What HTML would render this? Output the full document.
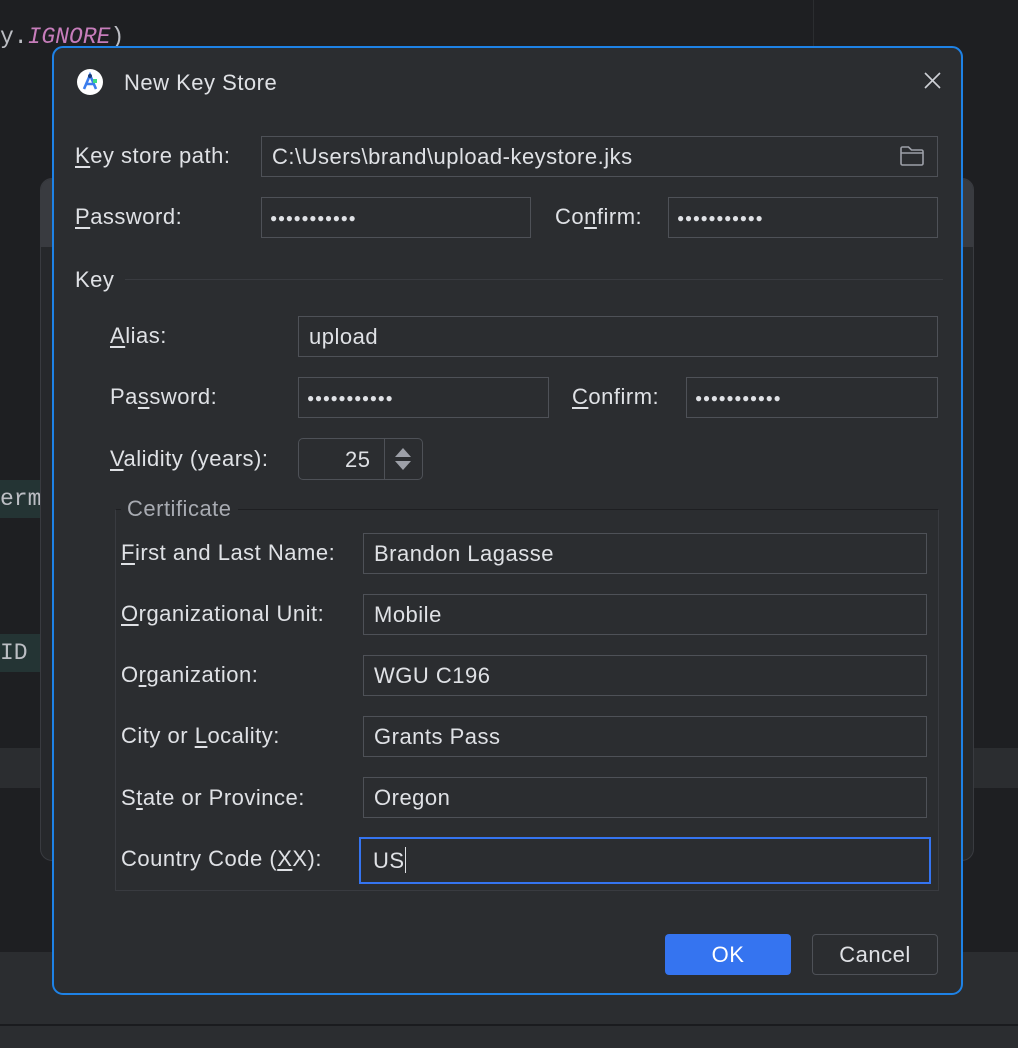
<!DOCTYPE html>
<html><head><meta charset="utf-8"><style>
*{margin:0;padding:0;box-sizing:border-box}
body{width:1018px;height:1048px;background:#1e1f22;position:relative;overflow:hidden;font-family:"Liberation Sans",sans-serif;font-size:22px;letter-spacing:0.5px;color:#dfe1e5}
.a{position:absolute}
.in{position:absolute;border:1px solid #4e5157;background:#2b2d30;height:41px;padding-left:10px;line-height:40px;color:#dfe1e5;font-size:22px}
.lb{position:absolute;line-height:26px;white-space:nowrap}
u{text-decoration:underline;text-underline-offset:3px}
.dots{letter-spacing:0.6px;font-size:12px;padding-left:8px}
</style></head><body>
<div class="a" style="left:813px;top:0;width:1px;height:178px;background:#2b2d30"></div>
<div class="a" style="left:0;top:24px;font-family:'Liberation Mono',monospace;font-size:23px;letter-spacing:0;color:#bcbec4">y.<span style="color:#c77dbb;font-style:italic">IGNORE</span>)</div>
<div class="a" style="left:0;top:480px;width:41px;height:38px;background:#243434"></div>
<div class="a" style="left:0;top:486px;font-family:'Liberation Mono',monospace;font-size:23px;letter-spacing:0;color:#bcbec4">erm</div>
<div class="a" style="left:0;top:634px;width:41px;height:38px;background:#243434"></div>
<div class="a" style="left:0;top:640px;font-family:'Liberation Mono',monospace;font-size:23px;letter-spacing:0;color:#bcbec4">ID</div>
<div class="a" style="left:0;top:748px;width:1018px;height:40px;background:#2b2d30"></div>
<div class="a" style="left:0;top:952px;width:1018px;height:72px;background:#2b2d30"></div>
<div class="a" style="left:0;top:1024px;width:1018px;height:2px;background:#1a1b1e"></div>
<div class="a" style="left:0;top:1026px;width:1018px;height:22px;background:#2b2d30"></div>
<div class="a" style="left:40px;top:178px;width:934px;height:683px;background:#26282b;border:1px solid #393b40;border-radius:12px;overflow:hidden">
 <div style="height:68px;background:#393b40"></div>
</div>
<div class="a" style="left:52px;top:46px;width:911px;height:949px;background:#2b2d30;border:2px solid #1e82e6;border-radius:11px"></div>
<svg class="a" style="left:76px;top:68px" width="28" height="28" viewBox="0 0 28 28"><circle cx="14" cy="14" r="13" fill="#fff"/><path d="M8 21 L14 7 L20 21 M10.5 16 H17.5" stroke="#3b7ded" stroke-width="2.6" fill="none"/><circle cx="14" cy="8" r="2" fill="#1b3d7a"/><rect x="17" y="11" width="4" height="4" fill="#3ddc84"/></svg>
<div class="lb" style="left:124px;top:70px">New Key Store</div>
<svg class="a" style="left:924px;top:72px" width="17" height="17"><path d="M1 1L16 16M16 1L1 16" stroke="#ced0d6" stroke-width="1.6"/></svg>

<div class="lb" style="left:75px;top:143px"><u>K</u>ey store path:</div>
<div class="in" style="left:261px;top:136px;width:677px">C:\Users\brand\upload-keystore.jks</div>
<svg class="a" style="left:899px;top:145px" width="26" height="22"><path d="M2 3.5a1.5 1.5 0 0 1 1.5-1.5h6l3 3h10a1.5 1.5 0 0 1 1.5 1.5v12a1.5 1.5 0 0 1-1.5 1.5h-19A1.5 1.5 0 0 1 2 18.5z M2 8h22" stroke="#9da0a8" stroke-width="1.6" fill="none"/></svg>

<div class="lb" style="left:75px;top:204px"><u>P</u>assword:</div>
<div class="in dots" style="left:261px;top:197px;width:270px">●●●●●●●●●●●</div>
<div class="lb" style="left:555px;top:204px">Co<u>n</u>firm:</div>
<div class="in dots" style="left:668px;top:197px;width:270px">●●●●●●●●●●●</div>

<div class="lb" style="left:75px;top:267px">Key</div>
<div class="a" style="left:125px;top:279px;width:818px;height:1px;background:#393b40"></div>

<div class="lb" style="left:110px;top:323px"><u>A</u>lias:</div>
<div class="in" style="left:298px;top:316px;width:640px">upload</div>
<div class="lb" style="left:110px;top:384px">Pa<u>s</u>sword:</div>
<div class="in dots" style="left:298px;top:377px;width:251px">●●●●●●●●●●●</div>
<div class="lb" style="left:572px;top:384px"><u>C</u>onfirm:</div>
<div class="in dots" style="left:686px;top:377px;width:252px">●●●●●●●●●●●</div>
<div class="lb" style="left:110px;top:446px"><u>V</u>alidity (years):</div>
<div class="a" style="left:298px;top:438px;width:125px;height:42px;border:1px solid #4e5157;border-radius:5px"></div>
<div class="a" style="left:384px;top:439px;width:1px;height:40px;background:#4e5157"></div>
<div class="lb" style="left:345px;top:447px">25</div>
<svg class="a" style="left:394px;top:446px" width="18" height="26"><path d="M1 11L9 2L17 11z M1 15L9 24L17 15z" fill="#9da0a8"/></svg>

<div class="a" style="left:115px;top:509px;width:824px;height:382px;border:1px solid #393b40;border-top-color:#1e1f22"></div>
<div class="lb" style="left:121px;top:496px;padding:0 6px;background:#2b2d30;color:#a8abb2">Certificate</div>

<div class="lb" style="left:121px;top:540px"><u>F</u>irst and Last Name:</div>
<div class="in" style="left:363px;top:533px;width:564px">Brandon Lagasse</div>
<div class="lb" style="left:121px;top:601px"><u>O</u>rganizational Unit:</div>
<div class="in" style="left:363px;top:594px;width:564px">Mobile</div>
<div class="lb" style="left:121px;top:662px">O<u>r</u>ganization:</div>
<div class="in" style="left:363px;top:655px;width:564px">WGU C196</div>
<div class="lb" style="left:121px;top:723px">City or <u>L</u>ocality:</div>
<div class="in" style="left:363px;top:716px;width:564px">Grants Pass</div>
<div class="lb" style="left:121px;top:785px">S<u>t</u>ate or Province:</div>
<div class="in" style="left:363px;top:777px;width:564px">Oregon</div>
<div class="lb" style="left:121px;top:846px">Country Code (<u>X</u>X):</div>
<div class="in" style="left:359px;top:837px;width:572px;height:47px;border:2px solid #3574f0;padding-left:12px;line-height:43px">US<span style="display:inline-block;width:1px;height:26px;background:#dfe1e5;vertical-align:-5px"></span></div>

<div class="a" style="left:665px;top:934px;width:126px;height:41px;background:#3574f0;border-radius:4px;color:#fff;text-align:center;line-height:41px">OK</div>
<div class="a" style="left:812px;top:934px;width:126px;height:41px;border:1px solid #4e5157;border-radius:4px;text-align:center;line-height:39px">Cancel</div>
</body></html>
